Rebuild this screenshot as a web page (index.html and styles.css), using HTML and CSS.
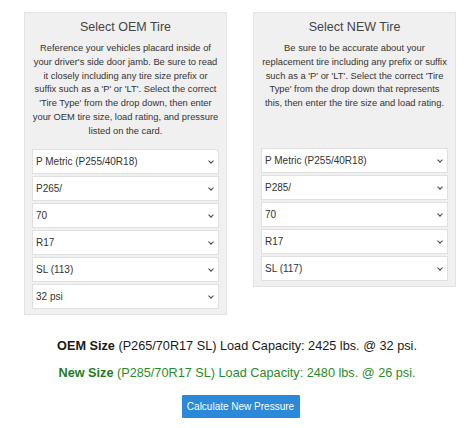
FILE: index.html
```html
<!DOCTYPE html>
<html lang="en">
<head>
    <meta charset="UTF-8">
    <title>Tire Pressure Calculator</title>
    <link rel="stylesheet" href="styles.css">
</head>
<body>

<div class="panels">
    <div class="panel">
        <h2>Select OEM Tire</h2>
        <p class="note">Reference your vehicles placard inside of your driver's side door jamb. Be sure to read it closely including any tire size prefix or suffix such as a 'P' or 'LT'. Select the correct 'Tire Type' from the drop down, then enter your OEM tire size, load rating, and pressure listed on the card.</p>
        <div class="field"><select><option>P Metric (P255/40R18)</option></select></div>
        <div class="field"><select><option>P265/</option></select></div>
        <div class="field"><select><option>70</option></select></div>
        <div class="field"><select><option>R17</option></select></div>
        <div class="field"><select><option>SL (113)</option></select></div>
        <div class="field"><select><option>32 psi</option></select></div>
    </div>

    <div class="panel">
        <h2>Select NEW Tire</h2>
        <p class="note">Be sure to be accurate about your replacement tire including any prefix or suffix such as a 'P' or 'LT'. Select the correct 'Tire Type' from the drop down that represents this, then enter the tire size and load rating.</p>
        <div class="field"><select><option>P Metric (P255/40R18)</option></select></div>
        <div class="field"><select><option>P285/</option></select></div>
        <div class="field"><select><option>70</option></select></div>
        <div class="field"><select><option>R17</option></select></div>
        <div class="field"><select><option>SL (117)</option></select></div>
    </div>
</div>

<p class="result"><b>OEM Size</b> (P265/70R17 SL) Load Capacity: 2425 lbs. @ 32 psi.</p>
<p class="result new"><b>New Size</b> (P285/70R17 SL) Load Capacity: 2480 lbs. @ 26 psi.</p>

<div class="actions">
    <button>Calculate New Pressure</button>
</div>

</body>
</html>
```

FILE: styles.css
```css
body {
    margin: 0;
    font-family: "Liberation Sans", Arial, sans-serif;
    background: #fff;
    color: #222;
}

.panels {
    display: flex;
    align-items: flex-start;
    gap: 26px;
    padding: 12px 18px 0 24px;
}

.panel {
    box-sizing: border-box;
    width: 203px;
    background: #f0f0f0;
    border: 1px solid #e2e2e2;
    padding: 6px 7px 5px;
}

.panel h2 {
    margin: 0;
    font-size: 12.5px;
    line-height: 16px;
    font-weight: normal;
    text-align: center;
    color: #444;
}

.note {
    margin: 7px 0 10px;
    min-height: 96px;
    font-size: 9.35px;
    line-height: 13.8px;
    text-align: center;
    color: #333;
}

.field {
    position: relative;
    margin-bottom: 2px;
}

.field:last-child {
    margin-bottom: 0;
}

.field::after {
    content: "";
    position: absolute;
    right: 6px;
    top: 10px;
    width: 3px;
    height: 3px;
    border-right: 1px solid #444;
    border-bottom: 1px solid #444;
    transform: rotate(45deg);
    pointer-events: none;
}

.field select {
    display: block;
    box-sizing: border-box;
    width: 100%;
    height: 25px;
    padding: 0 3px;
    border: 1px solid #e0e0e0;
    border-radius: 0;
    background: #fff;
    font-family: "Liberation Sans", Arial, sans-serif;
    font-size: 10px;
    color: #333;
    -webkit-appearance: none;
    appearance: none;
}

.result {
    margin: 0;
    font-size: 12.7px;
    line-height: 16px;
    text-align: center;
    color: #1a1a1a;
}

.result:first-of-type {
    margin-top: 23px;
}

.result.new {
    margin-top: 11px;
    color: #2b8a2b;
}

.result.new b {
    color: #1f7a1f;
}

.actions {
    display: flex;
    justify-content: center;
    padding: 14px 0 0 7px;
}

button {
    width: 118px;
    height: 23px;
    padding: 0;
    border: none;
    border-radius: 1px;
    background: #2a89d8;
    color: #fff;
    font-family: "Liberation Sans", Arial, sans-serif;
    font-size: 10px;
    cursor: pointer;
}
```
